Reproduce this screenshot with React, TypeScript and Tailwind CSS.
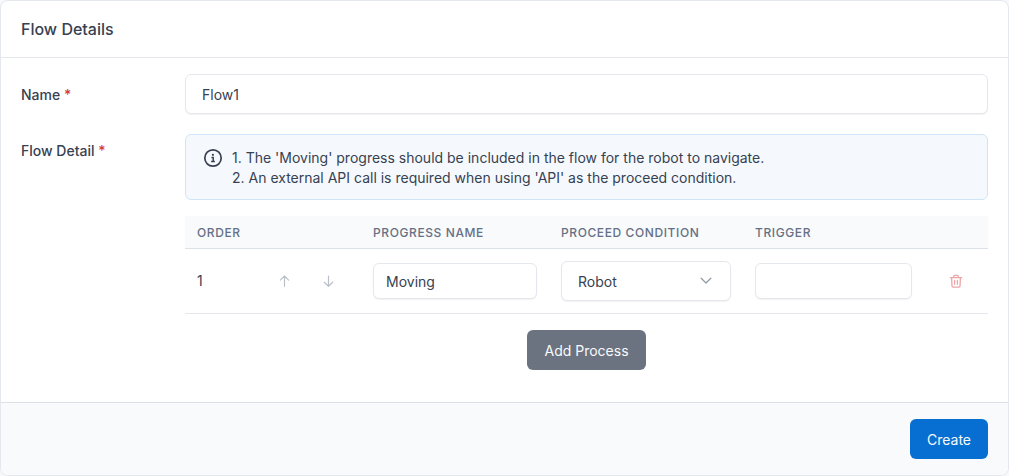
import { useState } from "react";

const TEXT_INPUT =
  "block w-full rounded-md border border-[#e4e7ec] bg-white text-sm text-[#374151] shadow-[0_1px_1px_rgba(30,41,59,0.06)] outline-none focus:border-[#0a6cd6]";

const ICON_BUTTON = "flex h-10 w-10 items-center justify-center rounded-md";

const BUTTON = "rounded-md border border-transparent px-4 pt-2.5 pb-2 leading-5 text-[#f8fafc]";

const HEAD_CELL = "border-b border-[#dce1e8] px-3 pt-[9px] pb-[7px] font-medium";

function InfoIcon() {
  return (
    <svg width="20" height="20" viewBox="0 0 20 20" fill="none" stroke="currentColor" className="shrink-0">
      <circle cx="10" cy="10" r="8.2" strokeWidth="1.7" />
      <circle cx="9.9" cy="6.8" r="1.1" fill="currentColor" stroke="none" />
      <path d="M8.4 9.4h1.8v4M8.1 13.4h3.8" strokeWidth="1.5" />
    </svg>
  );
}

function ArrowIcon({ down }: { down?: boolean }) {
  return (
    <svg
      width="14"
      height="14"
      viewBox="0 0 14 14"
      fill="none"
      stroke="currentColor"
      strokeWidth="1.2"
      strokeLinecap="round"
      strokeLinejoin="round"
    >
      <path d={down ? "M6.5 2v10.3M2.3 8.2l4.2 4.1 4.2-4.1" : "M6.5 12.3V2M2.3 6.1L6.5 2l4.2 4.1"} />
    </svg>
  );
}

function TrashIcon() {
  return (
    <svg
      width="14"
      height="14"
      viewBox="0 0 14 14"
      fill="none"
      stroke="currentColor"
      strokeWidth="1.3"
      strokeLinecap="round"
      strokeLinejoin="round"
    >
      <path d="M1.4 3.7h11.2M4.8 3.7V2.3c0-.5.4-.9.9-.9h2.6c.5 0 .9.4.9.9v1.4M2.6 3.7l.4 8.3c0 .7.5 1.1 1.1 1.1h5.8c.6 0 1.1-.4 1.1-1.1l.4-8.3M5.6 6.4v3.9M8.4 6.4v3.9" />
    </svg>
  );
}

function Required() {
  return <span className="text-[#d63939]">*</span>;
}

export default function App() {
  const [name, setName] = useState("Flow1");
  const [rows, setRows] = useState([{ progress: "Moving", condition: "Robot", trigger: "" }]);

  const update = (idx: number, field: string, value: string) =>
    setRows(rows.map((row, i) => (i === idx ? { ...row, [field]: value } : row)));

  const swap = (a: number, b: number) => {
    if (b < 0 || b >= rows.length) return;
    const next = [...rows];
    [next[a], next[b]] = [next[b], next[a]];
    setRows(next);
  };

  return (
    <div className="bg-[#f6f8fb] font-['Inter',sans-serif] text-sm text-[#374151]">
      <form
        className="overflow-hidden rounded-lg border border-[#e4e7ec] bg-white"
        onSubmit={(e) => e.preventDefault()}
      >
        <header className="border-b border-[#e4e7ec] px-5 py-4">
          <h1 className="text-base font-medium">Flow Details</h1>
        </header>

        <div className="flex flex-col gap-5 px-5 pt-4 pb-8">
          <div className="flex items-start">
            <label htmlFor="flow-name" className="w-41 shrink-0 pt-[11px] font-medium">
              Name <Required />
            </label>
            <input
              id="flow-name"
              className={`${TEXT_INPUT} h-10 px-4`}
              value={name}
              onChange={(e) => setName(e.target.value)}
            />
          </div>

          <div className="flex items-start">
            <div id="flow-detail" className="w-41 shrink-0 pt-[7px] font-medium">
              Flow Detail <Required />
            </div>

            <div className="min-w-0 flex-1">
              <div className="flex gap-[9px] rounded-md border border-[#cfe4f6] bg-[#f5f9fd] px-[17px] pt-[13px] pb-[11px]">
                <InfoIcon />
                <div className="leading-5">
                  <p>1. The 'Moving' progress should be included in the flow for the robot to navigate.</p>
                  <p>2. An external API call is required when using 'API' as the proceed condition.</p>
                </div>
              </div>

              <table
                aria-labelledby="flow-detail"
                className="mt-4 w-full table-fixed border-separate border-spacing-0 text-left"
              >
                <thead className="bg-[#f8fafc] text-xs tracking-wider text-[#667085] uppercase">
                  <tr>
                    <th className={`${HEAD_CELL} w-44`}>Order</th>
                    <th className={`${HEAD_CELL} w-47`}>Progress Name</th>
                    <th className={`${HEAD_CELL} w-[194px]`}>Proceed Condition</th>
                    <th className={HEAD_CELL}>Trigger</th>
                    <th className={`${HEAD_CELL} w-16`} />
                  </tr>
                </thead>
                <tbody>
                  {rows.map((row, idx) => (
                    <tr key={idx}>
                      <td className="border-b border-[#e4e7ec] p-3">
                        <div className="flex items-center gap-1">
                          <span className="flex-1">{idx + 1}</span>
                          <button
                            type="button"
                            aria-label="Move up"
                            className={`${ICON_BUTTON} text-[#bbc0c8]`}
                            onClick={() => swap(idx, idx - 1)}
                          >
                            <ArrowIcon />
                          </button>
                          <button
                            type="button"
                            aria-label="Move down"
                            className={`${ICON_BUTTON} text-[#bbc0c8]`}
                            onClick={() => swap(idx, idx + 1)}
                          >
                            <ArrowIcon down />
                          </button>
                        </div>
                      </td>
                      <td className="border-b border-[#e4e7ec] px-3">
                        <input
                          aria-label="Progress name"
                          className={`${TEXT_INPUT} h-9 px-3`}
                          value={row.progress}
                          onChange={(e) => update(idx, "progress", e.target.value)}
                        />
                      </td>
                      <td className="border-b border-[#e4e7ec] px-3">
                        <div className="relative">
                          <select
                            aria-label="Proceed condition"
                            className={`${TEXT_INPUT} h-10 appearance-none pt-0.5 pr-10 pl-4`}
                            value={row.condition}
                            onChange={(e) => update(idx, "condition", e.target.value)}
                          >
                            <option>Robot</option>
                            <option>API</option>
                          </select>
                          <svg
                            width="14"
                            height="14"
                            viewBox="0 0 14 14"
                            fill="none"
                            stroke="currentColor"
                            strokeWidth="1.3"
                            strokeLinecap="round"
                            strokeLinejoin="round"
                            className="pointer-events-none absolute top-3 right-[18px] text-[#959ca8]"
                          >
                            <path d="M2.2 5.3L7 10l4.8-4.7" />
                          </svg>
                        </div>
                      </td>
                      <td className="border-b border-[#e4e7ec] px-3">
                        <input
                          aria-label="Trigger"
                          className={`${TEXT_INPUT} h-9 px-3`}
                          value={row.trigger}
                          onChange={(e) => update(idx, "trigger", e.target.value)}
                        />
                      </td>
                      <td className="border-b border-[#e4e7ec] px-3">
                        <button
                          type="button"
                          aria-label="Delete process"
                          className={`${ICON_BUTTON} text-[#eda5a5]`}
                          onClick={() => setRows(rows.filter((_, i) => i !== idx))}
                        >
                          <TrashIcon />
                        </button>
                      </td>
                    </tr>
                  ))}
                </tbody>
              </table>

              <div className="mt-4 flex justify-center">
                <button
                  type="button"
                  className={`${BUTTON} bg-[#6b7280]`}
                  onClick={() => setRows([...rows, { progress: "", condition: "Robot", trigger: "" }])}
                >
                  Add Process
                </button>
              </div>
            </div>
          </div>
        </div>

        <footer className="flex justify-end border-t border-[#dce1e8] bg-[#f8fafc] px-5 py-4">
          <button type="submit" className={`${BUTTON} bg-[#066fd1]`}>
            Create
          </button>
        </footer>
      </form>
    </div>
  );
}
